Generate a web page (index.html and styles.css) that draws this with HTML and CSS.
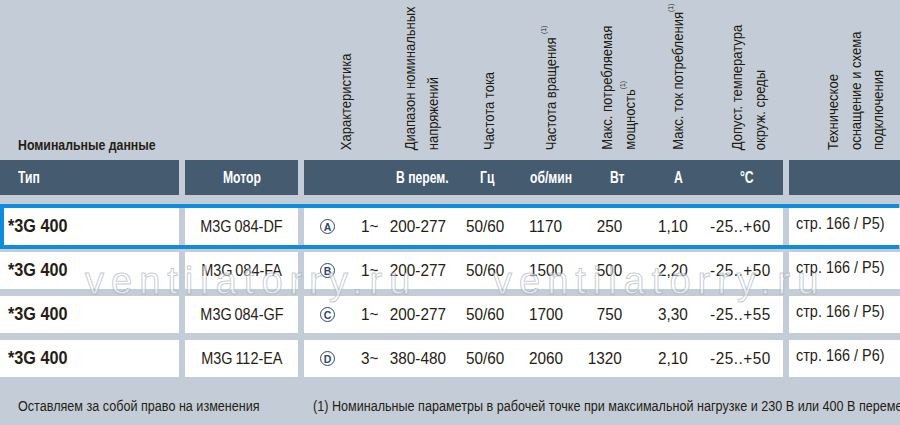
FILE: index.html
```html
<!DOCTYPE html>
<html lang="ru">
<head>
<meta charset="utf-8">
<title>Номинальные данные</title>
<link rel="stylesheet" href="styles.css">
</head>
<body>
<div class="sheet">
  <div class="grid top">
    <div class="c1 title"><span class="n">Номинальные данные</span></div>
    <div class="c2"></div>
    <div class="c3 sub">
      <div class="vh o-char">Характеристика</div>
      <div class="vh o-volt">Диапазон номинальных<br>напряжений</div>
      <div class="vh o-freq">Частота тока</div>
      <div class="vh o-rpm">Частота вращения <sup>(1)</sup></div>
      <div class="vh o-w">Макс. потребляемая<br>мощность<sup>(1)</sup></div>
      <div class="vh o-a">Макс. ток потребления<sup>(1)</sup></div>
      <div class="vh o-t">Допуст. температура<br>окруж. среды</div>
    </div>
    <div class="c4"><div class="vh o-tech">Техническое<br>оснащение и схема<br>подключения</div></div>
  </div>

  <div class="grid bar">
    <div class="c1 bl-type"><span class="n">Тип</span></div>
    <div class="c2 bl-motor"><span class="n nc">Мотор</span></div>
    <div class="c3 sub">
      <div></div>
      <div class="b-volt"><span class="n">В перем.</span></div>
      <div class="b-freq"><span class="n">Гц</span></div>
      <div class="b-rpm"><span class="n">об/мин</span></div>
      <div class="b-w"><span class="n">Вт</span></div>
      <div class="b-a"><span class="n">А</span></div>
      <div class="b-t"><span class="n">°C</span></div>
    </div>
    <div class="c4"></div>
  </div>

  <div class="rows">
    <div class="grid row hl">
      <div class="c1 type"><span class="n">*3G 400</span></div>
      <div class="c2 motor"><span class="n nc">M3G&thinsp;084-DF</span></div>
      <div class="c3 sub">
        <div class="d-circ"><span class="circ">A</span></div>
        <div class="d-volt"><span class="n"><span class="ph">1~</span>200-277</span></div>
        <div class="d-freq"><span class="n">50/60</span></div>
        <div class="d-rpm"><span class="n">1170</span></div>
        <div class="d-w"><span class="n nr">250</span></div>
        <div class="d-a"><span class="n">1,10</span></div>
        <div class="d-t"><span class="n">-25..+60</span></div>
      </div>
      <div class="c4 ref"><span class="n">стр. 166 / P5)</span></div>
    </div>
    <div class="grid row">
      <div class="c1 type"><span class="n">*3G 400</span></div>
      <div class="c2 motor"><span class="n nc">M3G&thinsp;084-FA</span></div>
      <div class="c3 sub">
        <div class="d-circ"><span class="circ">B</span></div>
        <div class="d-volt"><span class="n"><span class="ph">1~</span>200-277</span></div>
        <div class="d-freq"><span class="n">50/60</span></div>
        <div class="d-rpm"><span class="n">1500</span></div>
        <div class="d-w"><span class="n nr">500</span></div>
        <div class="d-a"><span class="n">2,20</span></div>
        <div class="d-t"><span class="n">-25..+50</span></div>
      </div>
      <div class="c4 ref"><span class="n">стр. 166 / P5)</span></div>
    </div>
    <div class="grid row">
      <div class="c1 type"><span class="n">*3G 400</span></div>
      <div class="c2 motor"><span class="n nc">M3G&thinsp;084-GF</span></div>
      <div class="c3 sub">
        <div class="d-circ"><span class="circ">C</span></div>
        <div class="d-volt"><span class="n"><span class="ph">1~</span>200-277</span></div>
        <div class="d-freq"><span class="n">50/60</span></div>
        <div class="d-rpm"><span class="n">1700</span></div>
        <div class="d-w"><span class="n nr">750</span></div>
        <div class="d-a"><span class="n">3,30</span></div>
        <div class="d-t"><span class="n">-25..+55</span></div>
      </div>
      <div class="c4 ref"><span class="n">стр. 166 / P5)</span></div>
    </div>
    <div class="grid row">
      <div class="c1 type"><span class="n">*3G 400</span></div>
      <div class="c2 motor"><span class="n nc">M3G&thinsp;112-EA</span></div>
      <div class="c3 sub">
        <div class="d-circ"><span class="circ">D</span></div>
        <div class="d-volt"><span class="n"><span class="ph">3~</span>380-480</span></div>
        <div class="d-freq"><span class="n">50/60</span></div>
        <div class="d-rpm"><span class="n">2060</span></div>
        <div class="d-w"><span class="n nr">1320</span></div>
        <div class="d-a"><span class="n">2,10</span></div>
        <div class="d-t"><span class="n">-25..+50</span></div>
      </div>
      <div class="c4 ref"><span class="n">стр. 166 / P6)</span></div>
    </div>
  </div>

  <div class="footer">
    <div class="f1"><span class="n">Оставляем за собой право на изменения</span></div>
    <div class="f2"><span class="n">(1) Номинальные параметры в рабочей точке при максимальной нагрузке и 230 В или 400 В переменного тока</span></div>
  </div>

  <div class="wm wm1">ventilatorry.ru</div>
  <div class="wm wm2">ventilatorry.ru</div>
</div>
</body>
</html>
```

FILE: styles.css
```css
* { box-sizing: border-box; }

html, body {
  margin: 0;
  padding: 0;
  background: #c4cdd7;
}

body {
  font-family: "Liberation Sans", Arial, sans-serif;
  color: #261d14;
  width: 900px;
  height: 425px;
  overflow: hidden;
}

.sheet {
  position: relative;
  width: 900px;
  height: 425px;
  overflow: hidden;
}

/* condensed look: horizontal squeeze of a text run */
.n {
  display: inline-block;
  white-space: nowrap;
  transform: scaleX(0.9);
  transform-origin: 0 50%;
}
.n.nc { transform-origin: 50% 50%; }
.n.nr { transform-origin: 100% 50%; }

.grid {
  display: grid;
  grid-template-columns: 179px 113px 479px 1fr;
  column-gap: 6px;
}

.sub {
  display: grid;
  grid-template-columns: 48px 108px 60px 60px 60px 60px 83px;
}

/* ---------- rotated header ---------- */
.top {
  height: 160px;
  padding-bottom: 10px;
  grid-template-rows: 150px;
}

.top .sub {
  grid-template-rows: 150px;
  align-items: end;
}
.top .c4 {
  display: flex;
  align-items: flex-end;
  height: 150px;
}

.title {
  align-self: end;
  font-size: 15px;
  font-weight: bold;
  padding-left: 18px;
  line-height: 15px;
  margin-bottom: -2px;
  white-space: nowrap;
}
.title .n { transform: scaleX(0.82); }

.vh {
  writing-mode: vertical-rl;
  font-size: 15.5px;
  line-height: 23px;
  white-space: nowrap;
  align-self: end;
  color: #221910;
  transform-origin: 50% 100%;
  transform: translateY(-84%) rotate(180deg) scaleY(0.84);
}

.vh sup {
  font-size: 8px;
  vertical-align: 7px;
  line-height: 0;
}

.o-char { margin-left: 30px; }
.o-volt { margin-left: 46px; }
.o-freq { margin-left: 17px; }
.o-rpm  { margin-left: 19px; }
.o-w    { margin-left: 15px; }
.o-a    { margin-left: 26px; }
.o-t    { margin-left: 25px; }
.o-tech { margin-left: 33px; line-height: 22.5px; }

/* ---------- dark bar ---------- */
.bar {
  height: 35px;
  margin-bottom: 9px;
  color: #ffffff;
  font-weight: bold;
  font-size: 16px;
}

.bar > div { background: #455b70; }
.bar .sub > div { display: flex; align-items: center; white-space: nowrap; }
.bar .c1, .bar .c2 { display: flex; align-items: center; }
.bar .n { transform: scaleX(0.76); }

.bl-type { padding-left: 18px; }
.bl-motor { justify-content: center; }

.b-volt { padding-left: 44px; }
.b-freq { padding-left: 20px; }
.b-rpm  { padding-left: 10px; }
.b-w    { padding-left: 30px; }
.b-a    { padding-left: 34px; }
.b-t    { padding-left: 40px; }

/* ---------- data rows ---------- */
.rows {
  display: flex;
  flex-direction: column;
  gap: 7px;
}

.row {
  height: 37px;
  font-size: 17px;
  white-space: nowrap;
}

.row > div { background: #ffffff; }
.row .c1, .row .c2, .row .c4 { display: flex; align-items: center; }
.row .sub > div { display: flex; align-items: center; }

.row.hl {
  height: 45px;
  width: 899px;
  border: 4px solid #0d8ddb;
  background: #c4cdd7;
  grid-template-columns: 175px 113px 479px 1fr;
  margin-bottom: -4px;
}

.row.hl .c1 { padding-left: 4px; }

.type {
  font-weight: bold;
  font-size: 18px;
  padding-left: 8px;
}

.motor { justify-content: center; }
.motor .n { transform: scaleX(0.85); }

.ref {
  padding-left: 7px;
  padding-bottom: 6px;
}
.ref .n { transform: scaleX(0.85); }

.d-circ { padding-left: 16px; }
.circ {
  width: 15px;
  height: 15px;
  border: 1.4px solid #2f4866;
  border-radius: 50%;
  color: #2f4866;
  font-size: 10.5px;
  font-weight: bold;
  display: inline-flex;
  align-items: center;
  justify-content: center;
}

.d-volt { padding-left: 9px; }
.ph { display: inline-block; width: 32px; }
.d-freq { padding-left: 6px; }
.d-rpm  { padding-left: 9px; }
.d-w    { justify-content: flex-end; padding-right: 18px; }
.d-a    { padding-left: 18px; }
.d-t    { padding-left: 10px; }
.d-t .n { letter-spacing: 0.6px; }

/* ---------- footer ---------- */
.footer {
  display: grid;
  grid-template-columns: 313px 1fr;
  margin-top: 19px;
  font-size: 14px;
  line-height: 20px;
  white-space: nowrap;
  overflow: hidden;
}

.f1 { padding-left: 18px; }
.f2 { overflow: hidden; }

/* ---------- watermark (overlay) ---------- */
.wm {
  position: absolute;
  top: 262px;
  font-size: 38px;
  line-height: 38px;
  letter-spacing: 7px;
  color: rgba(255, 255, 255, 0.55);
  -webkit-text-stroke: 1px rgba(150, 160, 172, 0.55);
  pointer-events: none;
  white-space: nowrap;
}

.wm1 { left: 85px; }
.wm2 { left: 493px; }
```
